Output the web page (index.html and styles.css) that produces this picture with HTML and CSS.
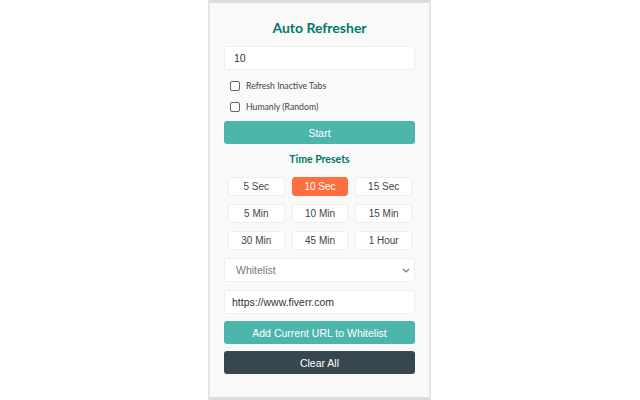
FILE: index.html
```html
<!DOCTYPE html>
<html lang="en">
<head>
    <meta charset="UTF-8">
    <meta name="viewport" content="width=device-width, initial-scale=1.0">
    <title>Auto Refresher</title>
    <link rel="stylesheet" href="styles.css">
</head>
<body>
    <div class="popup">
        <h1>Auto Refresher</h1>

        <input type="text" class="field" id="interval" value="10" aria-label="Refresh interval">

        <label class="check">
            <input type="checkbox" id="inactive-tabs">
            <span>Refresh Inactive Tabs</span>
        </label>
        <label class="check">
            <input type="checkbox" id="humanly">
            <span>Humanly (Random)</span>
        </label>

        <button class="btn btn-teal" id="start-btn">Start</button>

        <h2>Time Presets</h2>
        <div class="presets">
            <button class="preset">5 Sec</button>
            <button class="preset active">10 Sec</button>
            <button class="preset">15 Sec</button>
            <button class="preset">5 Min</button>
            <button class="preset">10 Min</button>
            <button class="preset">15 Min</button>
            <button class="preset">30 Min</button>
            <button class="preset">45 Min</button>
            <button class="preset">1 Hour</button>
        </div>

        <div class="select-wrap">
            <select class="field select" id="whitelist" aria-label="Whitelist">
                <option>Whitelist</option>
            </select>
            <svg class="chevron" width="8" height="5" viewBox="0 0 8 5"><path d="M1 1l3 3 3-3" fill="none" stroke="#777" stroke-width="1.2"/></svg>
        </div>

        <input type="text" class="field url" id="url" value="https://www.fiverr.com" aria-label="URL">

        <button class="btn btn-teal" id="add-btn">Add Current URL to Whitelist</button>
        <button class="btn btn-dark" id="clear-btn">Clear All</button>
    </div>
</body>
</html>
```

FILE: styles.css
```css
* {
    margin: 0;
    padding: 0;
    box-sizing: border-box;
}

body {
    background-color: #fff;
    font-family: "Liberation Sans", Arial, sans-serif;
    display: flex;
    justify-content: center;
}

.popup {
    width: 223px;
    height: 400px;
    margin-left: -1px;
    background-color: #f9f9f9;
    border: 2px solid #e4e4e4;
    border-top: 3px solid #dcdcdc;
    border-bottom: 3px solid #dcdcdc;
    padding: 16px 14px 0;
    display: flex;
    flex-direction: column;
}

h1 {
    font-family: Lato, sans-serif;
    font-size: 14px;
    font-weight: bold;
    color: #00796b;
    text-align: center;
    line-height: 18px;
    margin-bottom: 9px;
}

.field {
    width: 100%;
    height: 24px;
    background-color: #fff;
    border: 1px solid #eee;
    border-radius: 3px;
    font-family: "Liberation Sans", Arial, sans-serif;
    font-size: 10.5px;
    color: #333;
    padding: 0 9px;
    outline: none;
}

.check {
    display: flex;
    align-items: center;
    height: 21px;
    padding-left: 6px;
    font-family: Lato, sans-serif;
    font-size: 8.7px;
    color: #444;
}

.check:first-of-type {
    margin-top: 5px;
}

.check input {
    appearance: none;
    width: 10px;
    height: 10px;
    border: 1px solid #666;
    border-radius: 2px;
    background: #fff;
    margin-right: 6px;
}

.btn {
    width: 100%;
    height: 23px;
    border: none;
    border-radius: 3px;
    color: #fff;
    font-family: "Liberation Sans", Arial, sans-serif;
    font-size: 10.5px;
    cursor: pointer;
}

.btn-teal {
    background-color: #4db6ac;
}

.btn-dark {
    background-color: #37474f;
}

#start-btn {
    margin-top: 4px;
}

h2 {
    font-family: Lato, sans-serif;
    font-size: 10.5px;
    font-weight: bold;
    color: #00796b;
    text-align: center;
    line-height: 14px;
    margin: 8px 0 11px;
}

.presets {
    display: grid;
    grid-template-columns: repeat(3, 1fr);
    column-gap: 7px;
    row-gap: 8px;
    padding: 0 3px 0 4px;
}

.preset {
    height: 19px;
    background-color: #fff;
    border: 1px solid #eee;
    border-radius: 3px;
    font-family: "Liberation Sans", Arial, sans-serif;
    font-size: 10px;
    color: #444;
    cursor: pointer;
}

.preset.active {
    background-color: #ff6e40;
    border-color: #ff6e40;
    color: #fff;
}

.select-wrap {
    position: relative;
    margin-top: 8px;
}

.select {
    appearance: none;
    color: #777;
    padding-left: 11px;
}

.chevron {
    position: absolute;
    right: 5px;
    top: 10px;
}

.url {
    margin-top: 8px;
    padding-left: 7px;
}

#add-btn {
    margin-top: 7px;
}

#clear-btn {
    margin-top: 7px;
}
```
